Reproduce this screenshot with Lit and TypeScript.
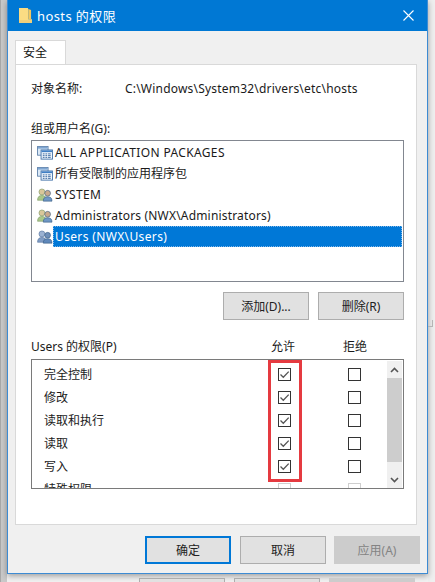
import { LitElement, html, css, svg } from "lit";
import { customElement } from "lit/decorators.js";

const packageIcon = svg`<svg class="ico" viewBox="0 0 18 16">
  <rect x="0.5" y="0.5" width="12" height="10" fill="#dbe9f7" stroke="#5b7ea8"/>
  <rect x="1" y="1" width="11" height="2" fill="#7fa6d2"/>
  <rect x="4.500" y="4.500" width="13" height="10.500" fill="#eef5fc" stroke="#3f6ea6"/>
  <rect x="5" y="5" width="12" height="2" fill="#3f7fc4"/>
  <path d="M6.500 9h2M9.500 9h2M12.500 9h3M6.500 11h2M9.500 11h2M12.500 11h3M6.500 13h2M9.500 13h2M12.500 13h3" stroke="#2f5f98" stroke-width="1"/>
</svg>`;

const usersIcon = (a: string, a2: string, b: string, b2: string, skin: string) => svg`<svg class="ico" viewBox="0 0 18 16">
  <circle cx="5.500" cy="4.500" r="3.400" fill="${skin}" stroke="${a2}" stroke-width=".7"/>
  <path d="M0.500 14c0-4 2-5.500 5-5.500s5 1.500 5 5.500z" fill="${a}" stroke="${a2}" stroke-width=".7"/>
  <circle cx="12" cy="6" r="3.300" fill="${b2}" stroke="#3b5f86" stroke-width=".7"/>
  <path d="M7 15c0-3.800 2-5 5-5s5 1.200 5 5z" fill="${b}" stroke="#3b5f86" stroke-width=".7"/>
</svg>`;

const sysIcon = usersIcon("#a9c78a", "#7f9a68", "#6f97c4", "#c9a98c", "#d9c79a");
const usersBlue = usersIcon("#7f9cc4", "#56759f", "#5f88ba", "#6f8fb8", "#9bb2d2");

const check = html`<svg class="mark" viewBox="0 0 11 11" width="11" height="11"><path d="M1.500 5.500 4.300 8.300 9.700 2.600" fill="none" stroke="#555" stroke-width="1.300"/></svg>`;

@customElement("app-root")
export class AppRoot extends LitElement {
  static styles = css`
    :host {
      display: block;
      width: 435px;
      height: 582px;
      overflow: hidden;
      position: relative;
      background: #d9d9d9;
      font-family: "Noto Sans", "Noto Sans CJK SC", sans-serif;
      font-size: 12px;
      color: #1a1a1a;
    }
    .backdrop {
      display: flex;
      width: 435px;
      height: 582px;
      box-sizing: border-box;
      background: linear-gradient(to right, #a8a8a8 0 1px, #c9c9c9 1px 7px, #f2f2f2 7px 428px, #efefef 428px);
    }
    .win {
      margin-left: 7px;
      width: 421px;
      height: 574px;
      box-sizing: border-box;
      border: 1px solid #3d8bd3;
      border-top: none;
      background: #f0f0f0;
      display: flex;
      flex-direction: column;
      box-shadow: 0 2px 6px rgba(0,0,0,.35);
      flex: none;
    }
    .title {
      height: 31px;
      flex: none;
      background: #0078d4;
      color: #fff;
      display: flex;
      align-items: center;
      padding: 0 13px 0 11px;
      gap: 5px;
      font-size: 13px;
    }
    .title .name { flex: 1; letter-spacing: .4px; }
    .tabs { padding: 9px 0 0 7px; height: 24px; flex: none; display: flex; }
    .tab {
      width: 51px;
      height: 24px;
      box-sizing: border-box;
      background: #fff;
      border: 1px solid #d9d9d9;
      border-bottom: none;
      padding: 3px 0 0 7px;
      line-height: 18px;
      color: #111;
    }
    .panel {
      margin: 0 10px 0 7px;
      height: 461px;
      flex: none;
      box-sizing: border-box;
      background: #fff;
      border: 1px solid #d9d9d9;
      padding: 0 12px 0 15px;
      display: flex;
      flex-direction: column;
    }
    .obj { display: flex; height: 18px; margin-top: 15px; line-height: 18px; }
    .obj .k { width: 94px; }
    .obj .v { letter-spacing: .2px; }
    .lab { line-height: 18px; height: 18px; margin-top: 22px; }
    .users {
      margin-top: 2px;
      height: 142px;
      box-sizing: border-box;
      border: 1px solid #828790;
      padding: 1px 1px 0 4px;
      flex: none;
    }
    .u { display: flex; height: 21px; align-items: center; }
    .u .ico { flex: none; width: 16px; height: 14px; margin: 0 0 0 1px; }
    .u .t { flex: 1; padding-left: 2px; line-height: 21px; }
    .u .t.sp1 { letter-spacing: .18px; }
    .u .t.sp2 { letter-spacing: .36px; }
    .u.sel .t { background: #0078d7; color: #fff; outline: 1px dotted #7fb6e8; outline-offset: -1px; }
    .btn {
      width: 86px;
      height: 28px;
      box-sizing: border-box;
      background: #e1e1e1;
      border: 1px solid #adadad;
      display: flex;
      align-items: center;
      justify-content: center;
      color: #222;
      flex: none;
    }
    .btn.def { border: 2px solid #0078d7; }
    .btn.off { background: #cccccc; border-color: #cccccc; color: #838383; }
    .ubtns { display: flex; justify-content: flex-end; gap: 9px; margin-top: 10px; }
    .phead { display: flex; margin-top: 18px; height: 18px; line-height: 18px; }
    .phead .l { width: 240px; }
    .phead .a { width: 72px; }
    .perm {
      margin-top: 3px;
      height: 130px;
      box-sizing: border-box;
      border: 1px solid #7a7a7a;
      display: flex;
      overflow: hidden;
      position: relative;
    }
    .rows { flex: 1; padding-top: 3px; }
    .row { display: flex; height: 23px; align-items: center; padding-left: 12px; flex: none; }
    .row .n { width: 234px; line-height: 23px; }
    .row .c2 { margin-left: 57px; }
    .cb {
      width: 13px;
      height: 13px;
      box-sizing: border-box;
      border: 1px solid #333;
      background: #fff;
      display: flex;
      align-items: center;
      justify-content: center;
      flex: none;
    }
    .cb .mark { flex: none; }
    .row.fade .cb { border-color: #cfcfcf; }
    .sb {
      width: 15px;
      margin: 1px 1px 0 0;
      background: #f0f0f0;
      display: flex;
      flex-direction: column;
      flex: none;
    }
    .sb .arr { height: 17px; display: flex; align-items: center; justify-content: center; flex: none; }
    .sb .thumb { height: 84px; background: #cdcdcd; flex: none; }
    .sb .gap { flex: 1; }
    .red {
      position: absolute;
      left: 268px;
      top: 360px;
      width: 34px;
      height: 122px;
      box-sizing: border-box;
      border: 3px solid #e53a40;
    }
    .foot { display: flex; justify-content: flex-end; gap: 8px; padding: 11px 7px 0 0; }
    .foot .btn:first-child { margin-right: 1px; }
    .under {
      position: absolute;
      left: 139px;
      top: 578px;
      display: flex;
      gap: 9px;
    }
    .under .b { width: 86px; height: 10px; box-sizing: border-box; background: #e1e1e1; border: 1px solid #adadad; }
    .under .b.off { background: #ccc; border-color: #ccc; }
    .tick {
      position: absolute;
      left: 428px;
      top: 320px;
      width: 4px;
      height: 6px;
      border-right: 1px solid #b5b5b5;
      border-bottom: 1px solid #b5b5b5;
    }
  `;

  render() {
    const users = [
      [packageIcon, "ALL APPLICATION PACKAGES", false, "sp2"],
      [packageIcon, "所有受限制的应用程序包", false, ""],
      [sysIcon, "SYSTEM", false, "sp2"],
      [sysIcon, "Administrators (NWX\\Administrators)", false, "sp1"],
      [usersBlue, "Users (NWX\\Users)", true, "sp2"],
    ] as const;
    const perms = ["完全控制", "修改", "读取和执行", "读取", "写入"];
    return html`
      <div class="backdrop">
        <div class="win">
          <div class="title">
            <svg viewBox="0 0 14 16" width="13" height="15">
              <path d="M0 0h9.500l.5 1v11h4v4H0z" fill="#fbdc83"/>
              <path d="M10 1l3 1v10h-3z" fill="#f3c860"/>
              <rect x="0" y="13" width="14" height="3" fill="#efce7c"/>
            </svg>
            <span class="name">hosts 的权限</span>
            <svg viewBox="0 0 11 11" width="11" height="11"><path d="M.5.5l10 10M10.500.5l-10 10" stroke="#fff" stroke-width="1.100" fill="none"/></svg>
          </div>
          <div class="tabs"><div class="tab">安全</div></div>
          <div class="panel">
            <div class="obj"><span class="k">对象名称:</span><span class="v">C:\\Windows\\System32\\drivers\\etc\\hosts</span></div>
            <div class="lab">组或用户名(G):</div>
            <div class="users">
              ${users.map(([ic, t, sel, sp]) => html`<div class="u ${sel ? "sel" : ""}">${ic}<span class="t ${sp}">${t}</span></div>`)}
            </div>
            <div class="ubtns"><div class="btn">添加(D)...</div><div class="btn">删除(R)</div></div>
            <div class="phead"><span class="l">Users 的权限(P)</span><span class="a">允许</span><span>拒绝</span></div>
            <div class="perm">
              <div class="rows">
                ${perms.map((p) => html`<div class="row"><span class="n">${p}</span><span class="cb">${check}</span><span class="cb c2"></span></div>`)}
                <div class="row fade"><span class="n">特殊权限</span><span class="cb"></span><span class="cb c2"></span></div>
              </div>
              <div class="sb">
                <div class="arr"><svg viewBox="0 0 9 6" width="9" height="6"><path d="M1 5l3.500-3.500L8 5" fill="none" stroke="#555" stroke-width="1.600"/></svg></div>
                <div class="thumb"></div>
                <div class="gap"></div>
                <div class="arr"><svg viewBox="0 0 9 6" width="9" height="6"><path d="M1 1l3.500 3.500L8 1" fill="none" stroke="#555" stroke-width="1.600"/></svg></div>
              </div>
            </div>
          </div>
          <div class="foot">
            <div class="btn def">确定</div><div class="btn">取消</div><div class="btn off">应用(A)</div>
          </div>
        </div>
      </div>
      <div class="red"></div>
      <div class="tick"></div>
      <div class="under"><div class="b"></div><div class="b"></div><div class="b off"></div></div>
    `;
  }
}
